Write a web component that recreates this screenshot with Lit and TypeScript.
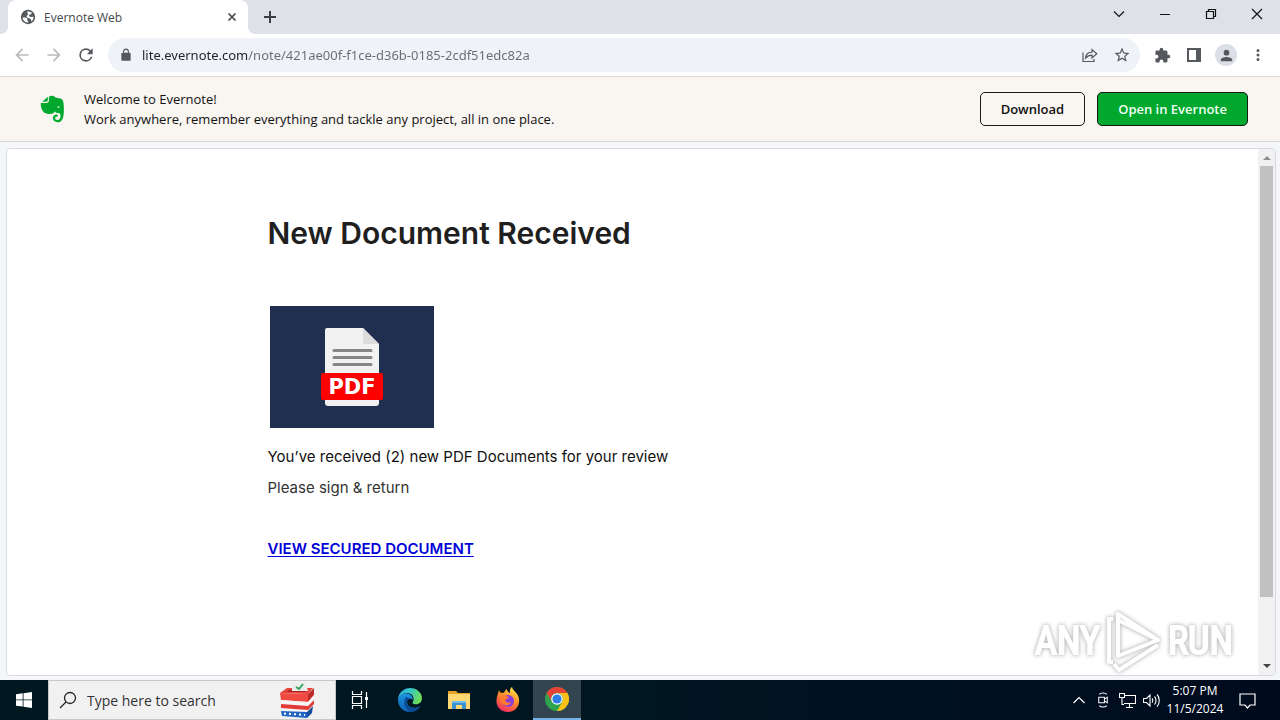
import { LitElement, html, css, svg } from "lit";
import { customElement } from "lit/decorators.js";

const icon = (size: number, body: unknown, box = "0 0 24 24") =>
  html`<svg class="icon" width=${size} height=${size} viewBox=${box} aria-hidden="true">${body}</svg>`;

const fill = (d: string) => svg`<path fill="currentColor" d=${d} />`;
const line = (d: string, w = 1) =>
  svg`<path fill="none" stroke="currentColor" stroke-width=${w} d=${d} />`;

const reload = fill(
  "M17.65 6.35A7.96 7.96 0 0 0 12 4a8 8 0 1 0 7.730 10h-2.080A6 6 0 1 1 12 6c1.660 0 3.140.690 4.220 1.780L13 11h7V4z"
);
const back = fill("M20 11H7.830l5.590-5.590L12 4l-8 8 8 8 1.410-1.410L7.830 13H20z");
const forward = fill("M4 11h12.170l-5.590-5.590L12 4l8 8-8 8-1.410-1.410L16.170 13H4z");
const lock = fill(
  "M18 8h-1V6A5 5 0 0 0 7 6v2H6a2 2 0 0 0-2 2v10c0 1.100.9 2 2 2h12a2 2 0 0 0 2-2V10a2 2 0 0 0-2-2zM15.100 8H8.900V6a3.100 3.100 0 0 1 6.200 0z"
);
const star = fill(
  "M22 9.240l-7.190-.620L12 2 9.190 8.630 2 9.240l5.460 4.730L5.820 21 12 17.270 18.180 21l-1.630-7.030zM12 15.400l-3.760 2.270 1-4.280-3.320-2.880 4.380-.380L12 6.100l1.710 4.040 4.380.380-3.320 2.880 1 4.280z"
);
const puzzle = fill(
  "M20.500 11H19V7a2 2 0 0 0-2-2h-4V3.500a2.500 2.500 0 0 0-5 0V5H4a2 2 0 0 0-2 2v3.800h1.500a2.700 2.700 0 0 1 0 5.400H2V20c0 1.100.9 2 2 2h3.800v-1.500a2.700 2.700 0 0 1 5.400 0V22H17a2 2 0 0 0 2-2v-4h1.500a2.500 2.500 0 0 0 0-5z"
);
const person = fill(
  "M12 12a4 4 0 1 0 0-8 4 4 0 0 0 0 8zm0 2c-2.670 0-8 1.340-8 4v2h16v-2c0-2.660-5.330-4-8-4z"
);
const dots = fill(
  "M12 8a2 2 0 1 0 0-4 2 2 0 0 0 0 4zm0 2a2 2 0 1 0 0 4 2 2 0 0 0 0-4zm0 6a2 2 0 1 0 0 4 2 2 0 0 0 0-4z"
);

@customElement("app-root")
export class AppRoot extends LitElement {
  static styles = css`
    :host {
      display: flex;
      flex-direction: column;
      height: 100vh;
      overflow: hidden;
      font-family: "Open Sans", "Noto Sans", sans-serif;
      font-size: 13px;
      color: #111;
      background: #f5f6f9;
    }
    * { box-sizing: border-box; }
    button, input { font: inherit; color: inherit; border: 0; padding: 0; background: none; outline: 0; }
    button { display: flex; align-items: center; justify-content: center; }
    .icon { display: block; flex: none; }
    .grow { flex: 1; min-width: 0; }

    .tabs { display: flex; height: 34px; background: #dee1e8; padding-left: 8px; flex: none; }
    .tab {
      position: relative; width: 240px; display: flex; align-items: center; gap: 8px;
      padding: 0 10px 0 12px; background: #fff; border-radius: 8px 8px 0 0; color: #45494d; font-size: 12px;
    }
    .tab::before, .tab::after {
      content: ""; position: absolute; bottom: 0; width: 8px; height: 8px;
    }
    .tab::before { right: 100%; background: radial-gradient(circle at 0 0, transparent 8px, #fff 8px); }
    .tab::after { left: 100%; background: radial-gradient(circle at 100% 0, transparent 8px, #fff 8px); }
    .newtab { width: 28px; margin-left: 8px; color: #3c4043; }
    .win { width: 46px; height: 28px; color: #111; }

    .toolbar {
      display: flex; align-items: center; height: 43px; flex: none; background: #fff;
      border-bottom: 1px solid #dcd8d6; padding: 0 6px; color: #55585d;
    }
    .nav { width: 32px; height: 32px; }
    .dim { color: #bbbcbe; }
    .omnibox {
      display: flex; align-items: center; height: 34px; border-radius: 17px; background: #eff2f6;
      margin: 0 6px; padding-left: 11px; padding-right: 2px;
    }
    .url {
      flex: 1; min-width: 0; margin-left: 9px; font-family: "Noto Sans", sans-serif; color: transparent;
      background: linear-gradient(90deg, #1f2125 105px, #686c71 105px);
      background-clip: text; -webkit-background-clip: text;
    }
    .avatar { width: 22px; height: 22px; border-radius: 50%; background: #dcdfe7; display: grid; place-items: center; }

    .banner {
      display: flex; align-items: center; gap: 12px; height: 65px; flex: none; background: #f9f5f1;
      border-bottom: 1px solid #d9d6d9; padding: 0 32px 0 40px;
    }
    .pitch { margin: 0 0 0 8px; line-height: 20px; color: #111; }
    .pitch span { display: block; }
    .cta { height: 34px; padding: 0 20px; border: 1px solid #181818; border-radius: 5px; font-weight: 600; }
    .primary { background: #00a82d; color: #f2fff4; }

    .viewport {
      flex: 1; min-height: 0; margin: 6px 4px 4px 6px; display: flex; background: #fff;
      border: 1px solid #dadbe0; border-radius: 4px; overflow: hidden;
    }
    .note { width: 100%; max-width: 730px; margin: 0 auto; padding: 64px 0; font-family: Inter, sans-serif; font-size: 15px; }
    h1 { margin: 0 0 53px; font-size: 30px; line-height: 40px; font-weight: 600; color: #1f1f1f; }
    .pdf { display: block; margin: 0 2px 14px; }
    p { margin: 0 0 1px; line-height: 30px; }
    .soft { color: #333; margin-bottom: 31px; }
    .view { color: #0000d8; font-weight: 600; text-underline-offset: 2px; text-decoration-thickness: 1px; }
    .scroll { width: 17px; display: flex; flex-direction: column; align-items: center; background: #f1f1f1; color: #8d8d8d; }
    .arrow { width: 17px; height: 17px; }
    .thumb { width: 13px; height: 82%; background: #c1c1c1; }
    .scroll .down { margin-top: auto; color: #444; }

    .mark {
      position: absolute; right: 47px; bottom: 47px; display: flex; align-items: center; gap: 4px;
      font: 38px/64px "Liberation Sans Narrow", "Roboto Condensed", sans-serif;
      color: #fff; -webkit-text-stroke: 2px #fff; filter: drop-shadow(0 0 2px #bbb) drop-shadow(0 0 1px #ddd); pointer-events: none;
    }

    .taskbar { display: flex; align-items: stretch; height: 40px; flex: none; background: linear-gradient(90deg, #001920, #001621 50%, #000b1e); color: #fff; }
    .task { width: 48px; }
    .apps { display: flex; gap: 1px; margin-left: 2px; }
    .active { background: #32454f; border-bottom: 2px solid #76b3ea; }
    .search { width: 288px; display: flex; align-items: center; padding: 0 20px 0 10px; background: #f1f1f1; border: 1px solid #c8c8c8; color: #222; }
    .search input { flex: 1; min-width: 0; margin-left: 10px; font-size: 14px; }
    .search input::placeholder { color: #333; opacity: 1; }
    .tray { width: 24px; }
    .clock { width: 64px; font-size: 12px; line-height: 18px; text-align: center; }
    .notify { width: 40px; margin-right: 13px; }
  `;

  render() {
    return html`
      <header class="tabs">
        <div class="tab">
          <svg class="icon" width="16" height="16" viewBox="0 0 16 16" aria-hidden="true">
            <circle cx="8" cy="8" r="7.200" fill="#55585c" />
            <path fill="#fff" d="M2.500 8.600c2.600-.4 4.300.1 4.800 1.200.5.900-.4 1.300.1 1.900.3.500 1 .5.900 1.900-3.200.2-5.500-2.100-5.800-5zM7 2.500c1.700-.4 3.700.2 4.800 1.300l-.4 1.300-2.100.6-.3 1.500 2 .8 2.600-.2c.1 1.700-.8 3.700-2.200 4.800-.3-1.400-.1-2.300-1.100-2.900-1.300-.7-3.200-.6-3.700-2-.4-1.200 1.400-1.300 1.400-2.100z" />
          </svg>
          <span class="grow">Evernote Web</span>
          <button aria-label="Close tab">${icon(12, line("M2.500 2.500l7 7m0-7l-7 7", 1.7), "0 0 12 12")}</button>
        </div>
        <button class="newtab" aria-label="New tab">${icon(14, line("M7 1v12M1 7h12", 2), "0 0 14 14")}</button>
        <div class="grow"></div>
        <button class="win" aria-label="Search tabs">${icon(12, line("M1 3.500l5 5 5-5", 1.2), "0 0 12 12")}</button>
        <button class="win" aria-label="Minimize">${icon(10, line("M0 5.500h10"), "0 0 10 10")}</button>
        <button class="win" aria-label="Restore">${icon(12, line("M1.500 3.500h7v7h-7zM3.500 3.500v-2h7v7h-2", 1.2), "0 0 12 12")}</button>
        <button class="win" aria-label="Close">${icon(12, line("M1 1l10 10M11 1L1 11", 1.2), "0 0 12 12")}</button>
      </header>

      <nav class="toolbar">
        <button class="nav dim" aria-label="Back">${icon(20, back)}</button>
        <button class="nav dim" aria-label="Forward">${icon(20, forward)}</button>
        <button class="nav" aria-label="Reload">${icon(20, reload)}</button>
        <div class="omnibox grow">
          ${icon(14, lock)}
          <input class="url" aria-label="Address" value="lite.evernote.com/note/421ae00f-f1ce-d36b-0185-2cdf51edc82a" />
          <button class="nav" aria-label="Share">${icon(16, line("M1 5.500v9h11v-2.500M3.500 11c.5-4 3-5.800 6.500-5.800V2.500l4.800 4.200-4.800 4.200V8.200C7.300 8.200 5.300 9 3.500 11z", 1.2), "0 0 16 16")}</button>
          <button class="nav" aria-label="Bookmark">${icon(18, star)}</button>
        </div>
        <button class="nav" aria-label="Extensions">${icon(17, puzzle)}</button>
        <button class="nav" aria-label="Side panel">${icon(14, svg`<path fill="currentColor" fill-rule="evenodd" d="M0 0h14v14H0zM2 2v10h7V2z" />`, "0 0 14 14")}</button>
        <button class="nav" aria-label="Profile"><span class="avatar">${icon(17, person)}</span></button>
        <button class="nav" aria-label="Menu">${icon(18, dots)}</button>
      </nav>

      <section class="banner">
        <svg class="icon" width="24" height="28" viewBox="0 0 24 28" aria-hidden="true">
          <path fill="#00a82d" d="M7.800 1.800V5c0 1.100-.6 1.700-1.700 1.700H2.300zM8.900 1.700C9.800.8 11.500.6 13 .9c1.300.2 2 .8 2.400 1.600l4.800.9c2.300.5 3 2 3.300 4.800.5 4.200.5 8.400 0 12-.6 4.300-2.200 7-5.700 7-3 0-4.900-1.700-4.900-4.100 0-2.200 1.500-3.700 3.700-3.700.8 0 1.300.4 1.300 1.100 0 .8-.6 1.300-1.400 1.300-.9 0-1.400.5-1.400 1.300 0 1.200 1 1.900 2.400 1.900 2 0 3-1.500 3-3.900 0-2-.6-2.900-2-3-1.800-.1-3-.6-3.600-1.900-.8 1.800-2.300 2.700-4.700 2.700-4.700 0-7.300-1.500-8.400-4.700C.9 11.500.5 9.700.9 7.900h5.200c1.800 0 2.800-.9 2.800-2.700z" />
          <path fill="#f9f5f1" d="M17.300 12.500c.3-1.700 2.200-1.700 2.600.3-.9-.3-1.700-.4-2.600-.3z" />
        </svg>
        <p class="pitch grow"><span>Welcome to Evernote!</span><span>Work anywhere, remember everything and tackle any project, all in one place.</span></p>
        <button class="cta">Download</button>
        <button class="cta primary">Open in Evernote</button>
      </section>

      <main class="viewport">
        <div class="grow">
          <article class="note">
            <h1>New Document Received</h1>
            <svg class="pdf" width="164" height="122" viewBox="0 0 164 122" role="img" aria-label="PDF document">
              <path fill="#202e4f" d="M0 0h164v122H0z" />
              <path fill="#f1f1f2" d="M57 22h36l16 16v59a3 3 0 0 1-3 3H58a3 3 0 0 1-3-3V24a2 2 0 0 1 2-2z" />
              <path fill="#dcdcde" d="M93 22l16 16H95a2 2 0 0 1-2-2z" />
              <path stroke="#858585" stroke-width="3" stroke-linecap="round" d="M64 44.500h37M64 51.500h37M64 58.500h37" />
              <rect x="51" y="67" width="62" height="27" rx="2" fill="#fe0000" />
              <text x="82" y="88" text-anchor="middle" fill="#fff" font-family="DejaVu Sans" font-weight="700" font-size="21">PDF</text>
            </svg>
            <p>You’ve received (2) new PDF Documents for your review</p>
            <p class="soft">Please sign &amp; return</p>
            <p><a class="view" href="#">VIEW SECURED DOCUMENT</a></p>
          </article>
        </div>
        <div class="scroll" aria-hidden="true">
          <div class="arrow">${icon(17, fill("M5 11l4-4 4 4z"), "0 0 17 17")}</div>
          <div class="thumb"></div>
          <div class="arrow down">${icon(17, fill("M5 6l4 4 4-4z"), "0 0 17 17")}</div>
        </div>
      </main>

      <div class="mark" aria-hidden="true">
        <span>ANY</span>
        <svg class="icon" width="60" height="64" viewBox="0 0 60 64">
          <path fill="none" stroke="currentColor" stroke-width="4" stroke-linejoin="round" d="M9 10H5v43h4M14 5v42l40-16zM10 55l5 6 39-25M14 11l36 18" />
        </svg>
        <span>RUN</span>
      </div>

      <footer class="taskbar">
        <button class="task" aria-label="Start">${icon(16, fill("M0 2.300L6.700 1.300V7.500H0zM7.500 1.200L16 0v7.500H7.500zM0 8.300h6.700v6.300L0 13.700zM7.500 8.300H16V16l-8.500-1.200z"), "0 0 16 16")}</button>
        <label class="search">
          ${icon(18, svg`<circle cx="11" cy="7" r="5.500" fill="none" stroke="currentColor" stroke-width="1.3" /><path stroke="currentColor" stroke-width="1.3" d="M7 11l-6 6" />`, "0 0 18 18")}
          <input aria-label="Search" placeholder="Type here to search" />
          <svg class="icon" width="36" height="38" viewBox="0 0 36 38" aria-hidden="true">
            <path fill="#e8463d" d="M1 12l7-5h26l-5 6z" />
            <path fill="#f04a42" d="M1 12l28 1v8L2 19z" />
            <path fill="#bd2b2a" d="M29 13l6-6v7l-6 7z" />
            <path fill="#f7f5f5" d="M2 19l27 2 6-7-1 14-6 8-25-3z" />
            <path fill="#e23c38" d="M2 23l27 2 6-6v4l-6 6-27-2z" />
            <path fill="#2166c4" d="M2 30l26 1v6L3 35z" />
            <path fill="#174d99" d="M28 31l6-6-1 7-5 5z" />
            <path stroke="#fff" stroke-width="2" stroke-dasharray="2 3" d="M5 32.500l21 1.500" />
            <path fill="#a92525" d="M10 9h18l-2 2H8z" />
            <path fill="#eceeed" d="M13 2l13-1 3 9H13z" />
            <path fill="none" stroke="#33a35a" stroke-width="2" d="M17 6l3 2 4-5" />
          </svg>
        </label>
        <button class="task" aria-label="Task view">${icon(18, svg`${line("M1.500 0v3.500h9V0M1.500 18v-3.500h9V18M1.500 5.500h9v7h-9zM15.500 1v16", 1.2)}<path fill="currentColor" d="M14 6h3v3h-3z" />`, "0 0 18 18")}</button>
        <div class="apps">
        <button class="task" aria-label="Edge">
          <svg class="icon" width="26" height="26" viewBox="0 0 26 26">
            <defs>
              <linearGradient id="e1" x1="0" y1="0" x2="1" y2=".3"><stop offset="0" stop-color="#2aa5e4" /><stop offset=".5" stop-color="#34c6c8" /><stop offset="1" stop-color="#6bdc5c" /></linearGradient>
              <linearGradient id="e2" x1="0" y1="0" x2="0" y2="1"><stop offset="0" stop-color="#1b96df" /><stop offset="1" stop-color="#0f5fb8" /></linearGradient>
            </defs>
            <path fill="url(#e2)" d="M1 12c2-5 7-7 11-5 3 1 4 4 4 6-1-2-6-2-6 2 0 5 7 8 13 4-2 4-6 6-10 6C6 25 1 20 1 12z" />
            <path fill="#0b4a94" d="M9 10c-3 4-2 11 4 15 4 0 8-2 10-6-6 4-13 1-13-4 0-2 1-3 3-4z" />
            <path fill="url(#e1)" d="M1 12C2 5 7 1 13 1c7 0 12 5 12 10 0 5-4 7-8 6-2-.5-2-1-1-2 2-5-1-9-6-9-4 0-7 2-9 6z" />
          </svg>
        </button>
        <button class="task" aria-label="File Explorer">
          <svg class="icon" width="22" height="20" viewBox="0 0 22 20">
            <path fill="#e3a128" d="M0 1h8l2 2h12v5H0z" /><path fill="#fdd872" d="M0 4h22v15H0z" />
            <path fill="#3b91d0" d="M4 11h14v8h-4v-4H8v4H4z" /><path fill="#6bbcec" d="M4 11h14v2H4z" />
          </svg>
        </button>
        <button class="task" aria-label="Firefox">
          <svg class="icon" width="24" height="26" viewBox="0 0 24 26">
            <defs><linearGradient id="f1" x1=".8" y1="0" x2=".3" y2="1"><stop offset="0" stop-color="#fff04a" /><stop offset=".45" stop-color="#ff9028" /><stop offset="1" stop-color="#f52b62" /></linearGradient></defs>
            <path fill="url(#f1)" d="M3 3c.5 1.500 1 2 2 3 1-.5 2-.5 3 0 .5-2 1.500-3 3-4 0 2 1 3 3 4-.5-3 .5-5 2-6 .5 3 3 4 5 7 5 7 1 18-9 18C4 25 0 19 .500 13 .800 9 2 7 3 3z" />
            <circle cx="12" cy="14" r="6" fill="#8a3ddb" />
            <path fill="#ff7b2c" d="M5 9c3-2 5 0 8 1-1 2-3 2-4 3 1 3 4 3 6 2-1 4-7 5-10 0-1-2-1-4 0-6z" />
          </svg>
        </button>
        <button class="task active" aria-label="Chrome">
          <svg class="icon" width="24" height="24" viewBox="0 0 24 24">
            <circle cx="12" cy="12" r="12" fill="#2fa44f" />
            <path fill="#e64235" d="M1.600 6A12 12 0 0 1 22.400 6H12a6 6 0 0 0-5.200 9z" />
            <path fill="#fbc116" d="M22.400 6A12 12 0 0 1 12 24l5.200-9A6 6 0 0 0 12 6z" />
            <circle cx="12" cy="12" r="5.800" fill="#fff" /><circle cx="12" cy="12" r="4.600" fill="#2f7de9" />
          </svg>
        </button>
        </div>
        <div class="grow"></div>
        <button class="tray" aria-label="Show hidden icons">${icon(12, line("M.5 9L6 3.500 11.500 9", 1.2), "0 0 12 12")}</button>
        <button class="tray" aria-label="Meet now">${icon(16, line("M3.500 5.500h6v6h-6zM9.500 7.500l3-2v6l-3-2M4 2.500c2-2 6-2 8 0M4 14.500c2 2 6 2 8 0", 1.1), "0 0 16 17")}</button>
        <button class="tray" aria-label="Network">${icon(17, line("M5 3.500h11.500v8H5M10.500 11.500v4M7 15.500h7M.500 1.500h5v4h-5zM3 5.500v7h2", 1.1), "0 0 17 17")}</button>
        <button class="tray" aria-label="Volume">${icon(17, line("M.500 6.500h3l3.500-3.500v11l-3.500-3.500h-3zM9 6.500c1 1 1 3 0 4M11.500 4.500c2 2 2 6 0 8M14 2.500c3 3 3 9 0 12", 1.1), "0 0 17 17")}</button>
        <button class="clock"><span>5:07 PM<br />11/5/2024</span></button>
        <button class="notify" aria-label="Notifications">${icon(17, line("M1 2h15v11h-5l-2.500 3L6 13H1z", 1.2), "0 0 17 17")}</button>
      </footer>
    `;
  }
}
